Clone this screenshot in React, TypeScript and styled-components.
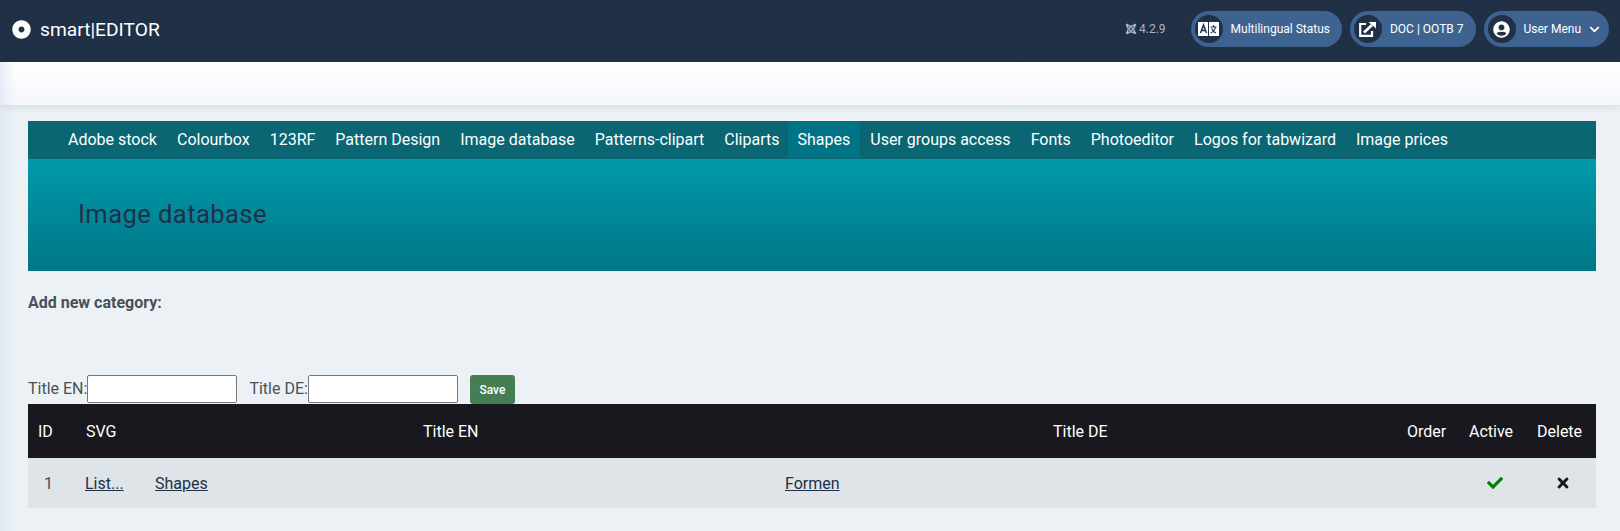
import React from "react";
import styled, { createGlobalStyle } from "styled-components";
import { FaCheck, FaChevronDown, FaDotCircle, FaJoomla, FaTimes, FaUserCircle } from "react-icons/fa";

const GlobalStyle = createGlobalStyle`
  html, body {
    margin: 0;
    padding: 0;
    background: #ecf1f6;
    font-family: Roboto, "Liberation Sans", sans-serif;
    font-size: 16px;
    color: #495057;
  }
  * { box-sizing: border-box; }
`;

const Page = styled.div`
  width: 1620px;
  height: 531px;
  overflow: hidden;
  background: linear-gradient(90deg, #e3eaf5 0, #ecf1f6 18px);
`;

const TopBar = styled.header`
  height: 62px;
  background: #203047;
  display: flex;
  align-items: center;
  justify-content: space-between;
  padding: 0 11px 4px 12px;
`;

const Brand = styled.div`
  display: flex;
  align-items: center;
  gap: 9px;
  color: #ffffff;
  font-size: 19.2px;
  svg { font-size: 19px; }
`;

const TopActions = styled.div`
  display: flex;
  align-items: center;
  gap: 8px;
`;

const Version = styled.span`
  display: flex;
  align-items: center;
  gap: 2px;
  margin-right: 17px;
  font-size: 12px;
  color: #a9b4c2;
`;

const Pill = styled.div`
  height: 36px;
  display: flex;
  align-items: center;
  gap: 8px;
  padding: 0 12px 0 4px;
  border-radius: 18px;
  background: #3f6390;
  color: #ffffff;
  font-size: 12px;
  font-weight: 400;
`;

const PillIcon = styled.span`
  width: 28px;
  height: 28px;
  border-radius: 50%;
  background: #203047;
  display: flex;
  align-items: center;
  justify-content: center;
  font-size: 17px;
`;

const PillCaret = styled(FaChevronDown)`
  font-size: 11px;
  margin-right: -3px;
`;

const SubBar = styled.div`
  height: 43px;
  background:
    linear-gradient(90deg, rgba(205, 218, 238, 0.45) 0, rgba(205, 218, 238, 0) 16px),
    linear-gradient(180deg, #ffffff 0, #f6f7fb 100%);
  box-shadow: 0 2px 7px rgba(60, 90, 150, 0.14);
`;

const Content = styled.main`
  padding: 16px 24px 0 28px;
`;

const Nav = styled.nav`
  height: 38px;
  padding-left: 30px;
  display: flex;
  background: #096672;
`;

const NavItem = styled.a<{ $active?: boolean }>`
  display: flex;
  align-items: center;
  padding: 0 10px;
  height: 37px;
  margin-left: ${(p) => (p.$active ? "-2px" : "0")};
  color: #ffffff;
  font-size: 16px;
  background: ${(p) => (p.$active ? "#017386" : "transparent")};
`;

const Hero = styled.div`
  height: 112px;
  padding: 40px 0 0 50px;
  background: linear-gradient(180deg, #009aab 0, #007687 100%);
`;

const HeroTitle = styled.h1`
  margin: 0;
  font-size: 25.6px;
  line-height: 30px;
  font-weight: 400;
  letter-spacing: 0.4px;
  color: #203047;
`;

const SectionLabel = styled.p`
  margin: 22px 0 0;
  height: 82px;
  font-size: 16px;
  line-height: 20px;
  font-weight: 700;
  color: #495057;
`;

const FormRow = styled.form`
  display: flex;
  align-items: flex-start;
  height: 29px;
`;

const FieldLabel = styled.label`
  font-size: 16px;
  line-height: 28px;
  color: #495057;
`;

const TextField = styled.input`
  width: 150px;
  height: 28px;
  margin-right: 12px;
  border: 1px solid #767676;
  border-radius: 2px;
  background: #fff;
`;

const SaveButton = styled.button`
  width: 45px;
  height: 29px;
  border: 0;
  border-radius: 3px;
  background: #457d54;
  color: #fff;
  font: 500 12px Roboto, sans-serif;
`;

const HeadRow = styled.div`
  display: grid;
  grid-template-columns: 48px 337px 630px 354px 62px 68px 69px;
  align-items: center;
  height: 54px;
  background: #18181e;
  color: #fff;
  font-size: 16px;
  font-weight: 400;
`;

const BodyRow = styled.div`
  display: grid;
  grid-template-columns: 47px 70px 630px 622px 64px 68px 67px;
  align-items: center;
  height: 50px;
  background: #dfe4e8;
  font-size: 16px;
`;

const Cell = styled.div<{ $align?: string }>`
  padding: 0 10px;
  text-align: ${(p) => p.$align || "left"};
  svg { vertical-align: -2px; }
`;

const IdCell = styled(Cell)`
  padding-left: 16px;
`;

const RowLink = styled.a`
  color: #203047;
  text-decoration: underline;
`;

const navItems = ["Adobe stock", "Colourbox", "123RF", "Pattern Design", "Image database", "Patterns-clipart", "Cliparts", "Shapes", "User groups access", "Fonts", "Photoeditor", "Logos for tabwizard", "Image prices"];

const LanguageIcon = () => (
  <svg width="21" height="14" viewBox="0 0 21 14">
    <rect width="21" height="14" fill="#fff" />
    <rect x="10" width="1" height="14" fill="#203047" />
    <path d="M2.5 11 5.5 3l3 8M3.7 8.5h3.6" fill="none" stroke="#203047" strokeWidth="1.5" />
    <path d="M12.5 5h6M15.5 3v2M17.5 5c-.6 3-2.500 5-5 6M13.500 6.500c.8 2 2.500 3.600 4.500 4.500" fill="none" stroke="#203047" strokeWidth="1.1" />
  </svg>
);

const ExternalIcon = () => (
  <svg width="17" height="15" viewBox="0 0 17 15">
    <path d="M7 2H1.200v11.800H13V9" fill="none" stroke="#fff" strokeWidth="2.200" />
    <path d="M5 10.500 13 3" fill="none" stroke="#fff" strokeWidth="2.600" />
    <path d="M9.500 0H17v6.500z" fill="#fff" />
  </svg>
);

export default function App() {
  return (
    <Page>
      <GlobalStyle />
      <TopBar>
        <Brand>
          <FaDotCircle />
          <span>smart|EDITOR</span>
        </Brand>
        <TopActions>
          <Version>
            <FaJoomla /> 4.2.9
          </Version>
          <Pill>
            <PillIcon><LanguageIcon /></PillIcon>
            Multilingual Status
          </Pill>
          <Pill>
            <PillIcon><ExternalIcon /></PillIcon>
            DOC | OOTB 7
          </Pill>
          <Pill>
            <PillIcon><FaUserCircle /></PillIcon>
            User Menu
            <PillCaret />
          </Pill>
        </TopActions>
      </TopBar>
      <SubBar />
      <Content>
        <Nav>
          {navItems.map((item) => (
            <NavItem key={item} $active={item === "Shapes"}>{item}</NavItem>
          ))}
        </Nav>
        <Hero>
          <HeroTitle>Image database</HeroTitle>
        </Hero>
        <SectionLabel>Add new category:</SectionLabel>
        <FormRow>
          <FieldLabel>Title EN:</FieldLabel>
          <TextField />
          <FieldLabel>Title DE:</FieldLabel>
          <TextField />
          <SaveButton type="button">Save</SaveButton>
        </FormRow>
        <HeadRow>
          <Cell>ID</Cell>
          <Cell>SVG</Cell>
          <Cell>Title EN</Cell>
          <Cell>Title DE</Cell>
          <Cell>Order</Cell>
          <Cell>Active</Cell>
          <Cell>Delete</Cell>
        </HeadRow>
        <BodyRow>
          <IdCell>1</IdCell>
          <Cell><RowLink>List...</RowLink></Cell>
          <Cell><RowLink>Shapes</RowLink></Cell>
          <Cell><RowLink>Formen</RowLink></Cell>
          <Cell />
          <Cell $align="center"><FaCheck color="green" /></Cell>
          <Cell $align="center"><FaTimes color="#18181e" /></Cell>
        </BodyRow>
      </Content>
    </Page>
  );
}
